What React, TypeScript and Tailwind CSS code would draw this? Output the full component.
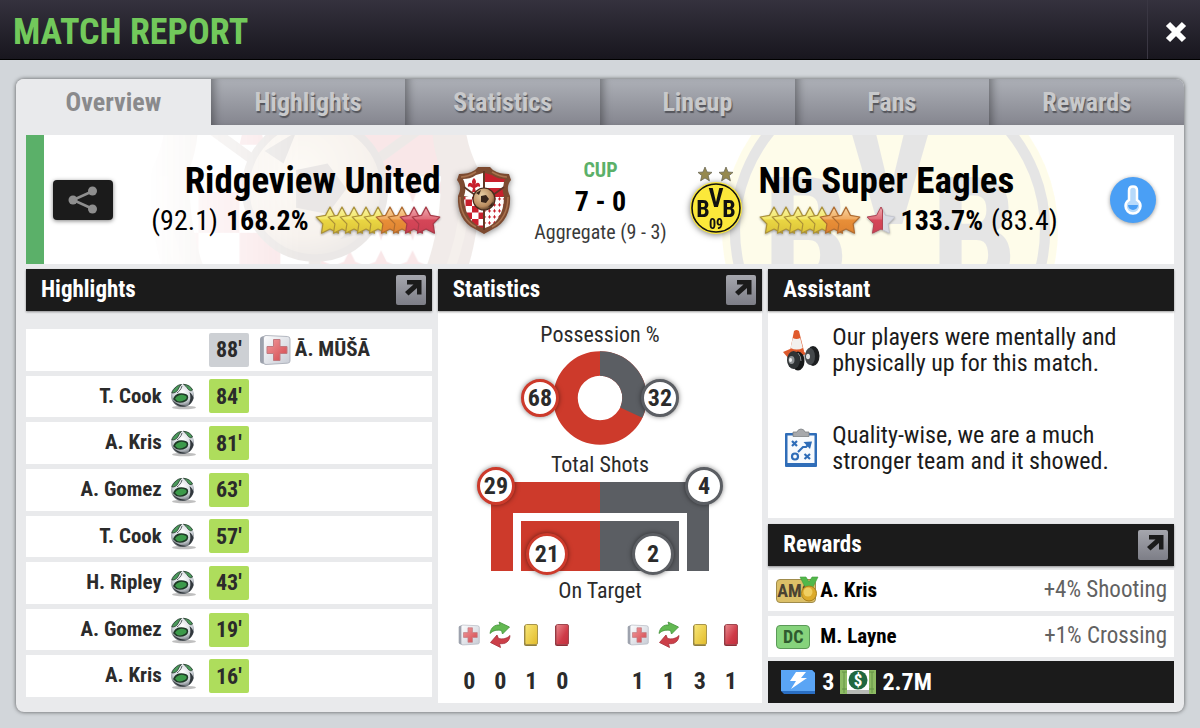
import { useState } from "react";

const TABS = ["Overview", "Highlights", "Statistics", "Lineup", "Fans", "Rewards"];

const HIGHLIGHTS = [
  { minute: 88, player: "Ā. MŪŠĀ", side: "away", type: "injury" },
  { minute: 84, player: "T. Cook", side: "home", type: "goal" },
  { minute: 81, player: "A. Kris", side: "home", type: "goal" },
  { minute: 63, player: "A. Gomez", side: "home", type: "goal" },
  { minute: 57, player: "T. Cook", side: "home", type: "goal" },
  { minute: 43, player: "H. Ripley", side: "home", type: "goal" },
  { minute: 19, player: "A. Gomez", side: "home", type: "goal" },
  { minute: 16, player: "A. Kris", side: "home", type: "goal" },
];

const STAR_PATH =
  "M15 1 L19.4 9.4 L28.8 11 L22.1 17.8 L23.5 27.2 L15 23 L6.5 27.2 L7.9 17.8 L1.2 11 L10.6 9.4 Z";

const CLUB_STAR_PATH =
  "M8 1 L10 6 L15 6.4 L11.2 9.6 L12.4 14.8 L8 12 L3.6 14.8 L4.8 9.6 L1 6.4 L6 6 Z";

function Gradients() {
  return (
    <svg width="0" height="0" className="absolute" aria-hidden="true">
      <defs>
        <linearGradient id="star-yellow" x1="0" y1="0" x2="0" y2="1">
          <stop offset="0" stopColor="#f8f3a6" />
          <stop offset="0.45" stopColor="#f3e768" />
          <stop offset="0.5" stopColor="#ead643" />
          <stop offset="1" stopColor="#dcc338" />
        </linearGradient>
        <linearGradient id="star-orange" x1="0" y1="0" x2="0" y2="1">
          <stop offset="0" stopColor="#f9d6a2" />
          <stop offset="0.45" stopColor="#f0ab62" />
          <stop offset="0.5" stopColor="#e88f38" />
          <stop offset="1" stopColor="#de8230" />
        </linearGradient>
        <linearGradient id="star-red" x1="0" y1="0" x2="0" y2="1">
          <stop offset="0" stopColor="#f0aab0" />
          <stop offset="0.45" stopColor="#e06c79" />
          <stop offset="0.5" stopColor="#d54658" />
          <stop offset="1" stopColor="#cc4053" />
        </linearGradient>
        <linearGradient id="box-grey" x1="0" y1="0" x2="1" y2="1">
          <stop offset="0" stopColor="#fdfdfe" />
          <stop offset="1" stopColor="#c8ccd5" />
        </linearGradient>
        <linearGradient id="cross-red" x1="0" y1="0" x2="1" y2="1">
          <stop offset="0" stopColor="#f09a9c" />
          <stop offset="1" stopColor="#d4474d" />
        </linearGradient>
        <linearGradient id="card-yellow" x1="0" y1="0" x2="1" y2="1">
          <stop offset="0" stopColor="#f8e778" />
          <stop offset="1" stopColor="#e2bb2b" />
        </linearGradient>
        <linearGradient id="card-red" x1="0" y1="0" x2="1" y2="1">
          <stop offset="0" stopColor="#e88b90" />
          <stop offset="0.6" stopColor="#cf3b48" />
          <stop offset="1" stopColor="#c22f3e" />
        </linearGradient>
        <radialGradient id="ball" cx="0.5" cy="0.35" r="0.7">
          <stop offset="0" stopColor="#ffffff" />
          <stop offset="0.6" stopColor="#cfd4da" />
          <stop offset="1" stopColor="#4c5358" />
        </radialGradient>
        <radialGradient id="crest-ball" cx="0.4" cy="0.35" r="0.7">
          <stop offset="0" stopColor="#e9cfa5" />
          <stop offset="0.7" stopColor="#b98a5d" />
          <stop offset="1" stopColor="#4b3020" />
        </radialGradient>
        <pattern id="checks" x="2" y="1" width="13" height="13" patternUnits="userSpaceOnUse">
          <rect width="13" height="13" fill="#fff" />
          <rect width="6.5" height="6.5" fill="#c8202d" />
          <rect x="6.5" y="6.5" width="6.5" height="6.5" fill="#c8202d" />
        </pattern>
        <pattern id="lilies" width="5" height="6" patternUnits="userSpaceOnUse">
          <rect width="5" height="6" fill="#fff" />
          <path d="M2.5 .8 L3.4 2.6 L4.4 3 L3 3.8 L2.5 5.2 L2 3.8 L.6 3 L1.6 2.6 Z" fill="#c8202d" />
        </pattern>
      </defs>
    </svg>
  );
}

function Stars({ colors }: { colors: string[] }) {
  const width = 30 + (colors.length - 1) * 12;
  return (
    <svg
      width={width}
      height="30"
      viewBox={`0 0 ${width} 30`}
      className="shrink-0 drop-shadow-[0_1px_1px_rgba(0,0,0,0.35)]"
      aria-hidden="true"
    >
      {colors.map((color, i) => (
        <path
          key={i}
          d={STAR_PATH}
          transform={`translate(${i * 12} 0)`}
          fill={`url(#star-${color})`}
          stroke={color === "yellow" ? "#ab9138" : color === "orange" ? "#b06c30" : "#a83a48"}
          strokeWidth="1.2"
          strokeLinejoin="round"
        />
      ))}
    </svg>
  );
}

function HalfStar() {
  return (
    <svg
      width="28"
      height="30"
      viewBox="1 0 28 30"
      className="shrink-0 drop-shadow-[0_1px_1px_rgba(0,0,0,0.3)]"
      aria-hidden="true"
    >
      <path d={STAR_PATH} fill="#d9dbe3" stroke="#c3c5ce" strokeLinejoin="round" />
      <path
        d="M15 1 L16.500 4 V23.700 L15 23 L6.500 27.200 L7.900 17.800 L1.200 11 L10.600 9.400 Z"
        fill="url(#star-red)"
        stroke="#b04452"
        strokeLinejoin="round"
      />
    </svg>
  );
}

function ShieldCrest({ className }: { className?: string }) {
  return (
    <svg viewBox="0 0 54 68" className={className} aria-hidden="true">
      <path
        d="M18 4 L21 1 H33 L36 4 C41 7 46 8 52 8 L54 14 C50 19 50 24 53 30 C54 45 48 58 36 63 L27 68 L18 63 C6 58 0 45 1 30 C4 24 4 19 0 14 L2 8 C8 8 13 7 18 4 Z"
        fill="#7c4a30"
      />
      <path
        d="M19 6 C14 9 9 11 4 11 M35 6 C40 9 45 11 50 11 M3 31 C3 45 9 56 19 61 M51 31 C51 45 45 56 35 61"
        fill="none"
        stroke="#a8714d"
        strokeWidth="1.5"
      />
      <path d="M26 7 L19 9 C15 12 10 13 6 13 C9 19 9 25 7 30 L26 34 Z" fill="#fff" />
      <path d="M28 7 L35 9 C39 12 44 13 48 13 C45 19 45 25 47 30 L28 34 Z" fill="#c8202d" />
      <path d="M28 16 H47 L46 22 H28 Z" fill="#fff" />
      <path d="M7 31 L26 31 V62 C14 58 7 47 7 31 Z" fill="url(#checks)" />
      <path d="M28 31 L47 31 C47 47 40 58 28 62 Z" fill="url(#lilies)" />
      <path
        d="M17 12 C20 15 19 17 18 19 C20 15 24 17 23 21 C21 20 20 21 18 22 L19 26 H15 L16 22 C14 21 13 20 11 21 C10 17 14 15 16 19 C15 17 14 15 17 12 Z"
        fill="#c8202d"
      />
      <path d="M27 5 V64 M7 21 L18 29 M47 21 L36 29" stroke="#5d3524" strokeWidth="1.6" />
      <circle cx="27" cy="33" r="11" fill="url(#crest-ball)" stroke="#472b1c" strokeWidth="1.2" />
      <path d="M24 30 L29 29 L32 33 L29 37 L24 36 Z M19 27 L24 24 L22 29 Z M31 41 L36 36 L35 40 Z" fill="#38241a" />
    </svg>
  );
}

// round badge only, the two stars above it are drawn by ClubStars
function RoundCrest({ className }: { className?: string }) {
  return (
    <svg viewBox="0 0 52 52" className={className} aria-hidden="true">
      <circle cx="26" cy="26" r="26" fill="#fbe83a" />
      <circle cx="26" cy="26" r="24" fill="none" stroke="#111" strokeWidth="1.6" />
      <g fill="#111" fontWeight="700" textAnchor="middle">
        <text x="13" y="35" fontSize="24">B</text>
        <text x="26" y="25" fontSize="26">V</text>
        <text x="39" y="35" fontSize="24">B</text>
        <text x="26" y="47" fontSize="14">09</text>
      </g>
    </svg>
  );
}

function ClubStars() {
  return (
    <svg width="38" height="16" viewBox="0 0 38 16" aria-hidden="true">
      <path d={CLUB_STAR_PATH} fill="#96894f" stroke="#6d6a55" strokeWidth="0.8" />
      <path d={CLUB_STAR_PATH} transform="translate(21 0)" fill="#96894f" stroke="#6d6a55" strokeWidth="0.8" />
    </svg>
  );
}

function FirstAidIcon({ className }: { className?: string }) {
  return (
    <svg viewBox="0 0 32 32" className={className} aria-hidden="true">
      <path d="M3 2.5 L7 1.5 V30.500 L3 29.500 Q1 29 1 27 V5 Q1 3 3 2.5 Z" fill="#9da2ad" />
      <path
        d="M7 1.5 L28.500 2.5 Q31 2.700 31 5 V27 Q31 29 28.500 29.200 L7 30.500 Q4.500 30.500 4.500 28 V4 Q4.500 1.500 7 1.5 Z"
        fill="url(#box-grey)"
        stroke="#a3a8b3"
        strokeWidth="0.8"
      />
      <path
        d="M14.500 5.500 H21 V12.500 H28 V19.500 H21 V26.500 H14.500 V19.500 H8 V12.500 H14.500 Z"
        fill="url(#cross-red)"
        stroke="#c07a80"
      />
    </svg>
  );
}

function BallIcon() {
  return (
    <svg width="28" height="28" viewBox="0 0 28 28" className="shrink-0" aria-hidden="true">
      <ellipse cx="15" cy="25.500" rx="12" ry="1.800" fill="#000" opacity="0.25" />
      <circle cx="13.500" cy="13.500" r="11.500" fill="url(#ball)" />
      <path d="M6 6 C8 3.500 11 2.500 12.500 2.500 C10 4 9.500 8 7.500 9.500 C6 11 3.500 11 2.800 11 C3.300 9 4.500 7.500 6 6 Z" fill="#4a9a5b" stroke="#26382c" strokeWidth="0.8" />
      <path d="M14.500 2.300 C19 2.500 22.500 5 23.500 8 C22 9.500 20 8.500 18.500 6.500 C17.500 5 16.500 3.500 14.500 2.300 Z" fill="#4a9a5b" stroke="#26382c" strokeWidth="0.8" />
      <path d="M5 17 C7 12 12 11 17 13 C19 14 19 17 16.500 18.500 C13 20.500 8 21 5 17 Z" fill="#3c9a4a" stroke="#1f3a27" strokeWidth="1.600" />
      <path d="M20.500 10 C23 12 24 14 24.500 16 C23.500 19.500 21.500 22 19.500 23 C21.500 19 22 14 20.500 10 Z" fill="#32383d" />
      <path d="M3.500 18 C6 23 12 25.500 17 24 C14 23.500 8 23 3.500 18 Z" fill="#2c3236" />
      <path d="M13 4 C12 8 10 9 8 11" fill="none" stroke="#5b6267" strokeWidth="1" />
    </svg>
  );
}

function SubstitutionIcon() {
  return (
    <svg width="24" height="28" viewBox="0 0 24 28" aria-hidden="true">
      <path d="M2 12.500 C3 6 7 3.500 12 4 L11 1 L21.500 6 L14.500 13 L13.500 9.500 C9 8.500 5 9.500 2 12.500 Z" fill="#63b952" stroke="#43913a" strokeWidth="0.8" />
      <path d="M22 14.500 C21.500 21 17 23.500 11.500 22.500 L12.500 26.500 L2.500 21.500 L9 14 L10.500 17.500 C15 18.500 19 17.500 22 14.500 Z" fill="#cc3f49" stroke="#a62f38" strokeWidth="0.8" />
    </svg>
  );
}

function CardIcon({ color }: { color: "yellow" | "red" }) {
  return (
    <svg width="16" height="24" viewBox="0 0 16 24" aria-hidden="true">
      <path d="M1 3 V21 Q1 23 3 23 H14 L4 2 Z" fill={color === "yellow" ? "#8d7c3c" : "#8c2d36"} />
      <rect
        x="2"
        y="1.5"
        width="12.5"
        height="20"
        rx="1.5"
        fill={`url(#card-${color})`}
        stroke={color === "yellow" ? "#a8954b" : "#a04850"}
      />
    </svg>
  );
}

function TrainingIcon() {
  return (
    <svg width="38" height="42" viewBox="0 0 38 42" className="shrink-0" aria-hidden="true">
      <path d="M1 23 L8 20 H20 L24 25 L18 30 H7 Z" fill="#dd5a2e" />
      <path d="M12 2 Q14.500 0 17 2 L22 22 Q15 26 8 22 Z" fill="#e05a2c" />
      <path d="M10.800 9 Q14.500 11 18.200 9 L20.800 19 Q15 22 8.500 19 Z" fill="#f2f0ee" />
      <path d="M18 27 L28 24 L29 28 L19 32 Z" fill="#a9adb0" />
      <ellipse cx="31" cy="27" rx="6.500" ry="10" fill="#1c1e20" />
      <ellipse cx="28" cy="27.500" rx="5" ry="8.500" fill="#44484b" />
      <ellipse cx="16" cy="32" rx="6.500" ry="9.500" fill="#17191a" />
      <ellipse cx="11.500" cy="31" rx="6.500" ry="9" fill="#2f3335" />
      <ellipse cx="9.500" cy="31" rx="3" ry="4" fill="#8d9194" />
      <ellipse cx="8.500" cy="31" rx="1.500" ry="2" fill="#eef0f1" />
      <ellipse cx="26" cy="27.500" rx="2" ry="2.800" fill="#dfe1e2" />
      <path d="M16 24 Q19 27 19 32" fill="none" stroke="#8d9194" strokeWidth="1" />
    </svg>
  );
}

function TacticsIcon() {
  return (
    <svg width="34" height="40" viewBox="0 0 34 40" className="shrink-0" aria-hidden="true">
      <rect x="1" y="5" width="32" height="34" rx="1" fill="#2f6db8" />
      <rect x="3.5" y="7.5" width="27" height="27.5" fill="#f7fafd" />
      <path d="M9 4 H13 Q14 1 17 1 Q20 1 21 4 H25 V8.500 H9 Z" fill="#a7a9ac" stroke="#7e8184" strokeWidth="0.8" />
      <g fill="none" stroke="#2f6db8" strokeWidth="2.2">
        <path d="M8 13 L13 18 M13 13 L8 18" />
        <path d="M20.500 26 L26 31 M26 26 L20.500 31" />
        <circle cx="11" cy="28.5" r="3" />
        <path d="M14 24 L19 19 H22 L25 16" />
      </g>
      <path d="M19.500 14 L28 13.500 L26 21 Z" fill="#2f6db8" />
    </svg>
  );
}

function EnergyIcon() {
  return (
    <svg width="36" height="26" viewBox="0 0 36 26" aria-hidden="true">
      <path d="M1 1 H32 L35 4 V25 H4 L1 22 Z" fill="#2a6fc4" />
      <path d="M1 1 H32 L35 4 V22 H1 Z" fill="#5aa5f5" />
      <path d="M16 3 H26 L21 9 H27 L11 20 L16 12 H10 Z" fill="#fff" />
    </svg>
  );
}

function CashIcon() {
  return (
    <svg width="36" height="26" viewBox="0 0 36 26" aria-hidden="true">
      <rect x="0" y="1" width="36" height="24" fill="#8dbb63" />
      <path d="M2 3 H34 M2 20 H34 M4 3 V24 M32 3 V24" stroke="#659447" strokeWidth="1" fill="none" />
      <rect x="7" y="1" width="22" height="20" fill="#fff" />
      <rect x="7" y="21" width="22" height="4" fill="#b7bab5" />
      <circle cx="18" cy="11" r="9.5" fill="#1f6840" />
      <text x="18" y="17" textAnchor="middle" fontSize="17" fontWeight="700" fill="#fff">
        $
      </text>
    </svg>
  );
}

function MedalIcon({ className }: { className?: string }) {
  return (
    <svg width="20" height="26" viewBox="0 0 20 26" className={className} aria-hidden="true">
      <path d="M1 1 H7 L10 6 L13 1 H19 L13 13 H7 Z" fill="#52b84a" stroke="#3f9a3a" strokeWidth="0.6" />
      <circle cx="10" cy="17.5" r="7.5" fill="#dcab2c" stroke="#a97f1c" />
      <circle cx="9" cy="16" r="4.5" fill="#f0cf62" />
    </svg>
  );
}

function OpenButton({ label }: { label: string }) {
  return (
    <button
      type="button"
      aria-label={label}
      className="flex size-[30px] items-start justify-end rounded-xs bg-linear-to-b from-[#a5a6ad] to-[#7d7e87] pt-1 pr-1"
    >
      <svg width="18" height="18" viewBox="0 0 18 18" aria-hidden="true">
        <path d="M3 1 H17.500 V15.500 H13 V9 L4.500 16.500 L1 13 L9.500 5.500 H3 Z" fill="#1b1b1b" />
      </svg>
    </button>
  );
}

function PanelHeader({ title, link }: { title: string; link?: boolean }) {
  return (
    <div className="flex h-[42px] shrink-0 items-center justify-between bg-[#1b1b1b] pr-1.5 pl-[15px] shadow-[0_1px_2px_rgba(0,0,0,0.4)]">
      <h2 className="text-[23px] font-bold text-white">{title}</h2>
      {link && <OpenButton label={`Open ${title}`} />}
    </div>
  );
}

function ValueBadge({ value, className }: { value: number; className: string }) {
  return (
    <span
      className={`absolute flex items-center justify-center rounded-full bg-white text-2xl font-bold text-[#2b2b2b] shadow-[0_0_5px_rgba(0,0,0,0.5)] ${className}`}
    >
      {value}
    </span>
  );
}

function TeamCounts({ counts }: { counts: number[] }) {
  const icons = [
    <FirstAidIcon className="size-[22px]" />,
    <SubstitutionIcon />,
    <CardIcon color="yellow" />,
    <CardIcon color="red" />,
  ];
  return (
    <ul className="grid grid-cols-4">
      {counts.map((count, i) => (
        <li key={i} className="flex w-[31px] flex-col items-center gap-5">
          <span className="flex h-7 items-center">{icons[i]}</span>
          <span className="text-2xl leading-6 font-bold">{count}</span>
        </li>
      ))}
    </ul>
  );
}

function HighlightsPanel() {
  return (
    <section className="flex flex-col">
      <PanelHeader title="Highlights" link />
      <ol className="mt-[18px] mb-1.5 flex flex-1 flex-col gap-[5px] text-[21px] font-bold text-[#2b2b2b]">
        {HIGHLIGHTS.map((event) => (
          <li key={event.minute} className="grid min-h-9 flex-1 grid-cols-2 items-center bg-white">
            <div className="flex items-center justify-end">
              {event.side === "home" && (
                <>
                  <span>{event.player}</span>
                  <span className="mr-3 ml-[7px]">
                    <BallIcon />
                  </span>
                </>
              )}
              <span
                className={`-mr-5 flex h-[34px] w-10 items-center justify-center rounded-xs text-[22px] ${
                  event.type === "goal" ? "bg-[#aedd5c]" : "bg-[#cdd0d4]"
                }`}
              >
                {event.minute}'
              </span>
            </div>
            <div className="flex items-center gap-1 pl-[30px]">
              {event.side === "away" && (
                <>
                  <FirstAidIcon className="size-8" />
                  <span>{event.player}</span>
                </>
              )}
            </div>
          </li>
        ))}
      </ol>
    </section>
  );
}

function StatisticsPanel() {
  return (
    <section className="flex flex-col bg-white">
      <PanelHeader title="Statistics" link />
      <div className="flex flex-1 flex-col items-center pt-3 pb-2.5 text-[#2b2b2b]">
        <h3 className="text-[22px] leading-6">Possession %</h3>
        <div className="relative mt-1">
          <svg width="94" height="94" viewBox="-47 -47 94 94" aria-hidden="true">
            <circle r="34.5" fill="none" stroke="#cd3a2b" strokeWidth="24.5" />
            <circle
              r="34.5"
              fill="none"
              stroke="#5b5e63"
              strokeWidth="24.5"
              pathLength="100"
              strokeDasharray="32 68"
              transform="rotate(-90)"
            />
          </svg>
          <ValueBadge value={68} className="top-7 -left-8 size-[38px] border-3 border-[#cd3a2b]" />
          <ValueBadge value={32} className="top-7 -right-8 size-[38px] border-3 border-[#5b5e63]" />
        </div>
        <h3 className="mt-2 text-[22px] leading-6">Total Shots</h3>
        <div className="relative mt-1">
          <svg width="218" height="90" viewBox="0 0 218 90" aria-hidden="true">
            <path d="M0 1 H109 V32 H22 V90 H0 Z M30 40 H109 V90 H30 Z" fill="#cd3a2b" />
            <path d="M109 1 H218 V90 H196 V32 H109 Z M109 40 H188 V90 H109 Z" fill="#5b5e63" />
          </svg>
          <ValueBadge value={29} className="-top-3.5 -left-3.5 size-[38px] border-3 border-[#cd3a2b]" />
          <ValueBadge value={4} className="-top-3.5 -right-3.5 size-[38px] border-3 border-[#5b5e63]" />
          <ValueBadge value={21} className="top-[52px] left-[35px] size-[42px] border-3 border-[#cd3a2b]" />
          <ValueBadge value={2} className="top-[52px] right-[35px] size-[42px] border-3 border-[#5b5e63]" />
        </div>
        <h3 className="mt-2 text-[22px] leading-6">On Target</h3>
        <div className="mt-auto flex w-full justify-between px-4">
          <TeamCounts counts={[0, 0, 1, 0]} />
          <TeamCounts counts={[1, 1, 3, 1]} />
        </div>
      </div>
    </section>
  );
}

function AssistantPanel() {
  return (
    <section className="mb-1.5 flex flex-1 flex-col bg-white">
      <PanelHeader title="Assistant" />
      <ul className="flex flex-col gap-[46px] px-3.5 pt-[13px] text-2xl leading-[26px] text-[#1b1b1b]">
        <li className="flex items-center gap-3">
          <TrainingIcon />
          <p className="max-w-[320px]">Our players were mentally and physically up for this match.</p>
        </li>
        <li className="flex items-center gap-3">
          <span className="flex w-[38px] justify-center">
            <TacticsIcon />
          </span>
          <p className="max-w-[300px]">Quality-wise, we are a much stronger team and it showed.</p>
        </li>
      </ul>
    </section>
  );
}

function RewardsPanel() {
  return (
    <section>
      <PanelHeader title="Rewards" link />
      <ul className="my-1 flex flex-col gap-[5px] text-[21px]">
        <li className="flex h-[41px] items-center bg-white pr-[7px] pl-2">
          <span className="w-11">
            <span className="relative flex h-6 w-10 items-center rounded-sm border border-[#a08c4c] bg-[#dcc068] text-lg font-bold text-[#4b4332]">
              AMC
              <MedalIcon className="absolute -top-1 -right-1" />
            </span>
          </span>
          <span className="flex-1 font-bold text-black">A. Kris</span>
          <span className="text-[23px] text-[#626262]">+4% Shooting</span>
        </li>
        <li className="flex h-[41px] items-center bg-white pr-[7px] pl-2">
          <span className="w-11">
            <span className="flex h-6 w-[34px] items-center justify-center rounded-sm border border-[#5b9a58] bg-[#86d37c] text-lg font-bold text-[#2f5a2f]">
              DC
            </span>
          </span>
          <span className="flex-1 font-bold text-black">M. Layne</span>
          <span className="text-[23px] text-[#626262]">+1% Crossing</span>
        </li>
      </ul>
      <div className="flex h-[42px] items-center gap-1.5 bg-[#1b1b1b] px-3 text-2xl font-bold text-white">
        <EnergyIcon />
        <span>3</span>
        <CashIcon />
        <span>2.7M</span>
      </div>
    </section>
  );
}

function Scoreboard() {
  return (
    <section className="relative flex h-[129px] items-center overflow-hidden border-l-18 border-[#5bb069] bg-white">
      <ShieldCrest className="absolute -top-[154px] left-[101px] w-[340px] opacity-10 [mask-image:linear-gradient(to_right,transparent,black_45%)]" />
      <RoundCrest className="absolute -top-[73px] left-[678px] w-[336px] opacity-10" />

      <button
        type="button"
        aria-label="Share"
        className="relative ml-[9px] flex h-10 w-[60px] shrink-0 items-center justify-center rounded-sm bg-[#1b1b1b] shadow-[0_1px_4px_rgba(0,0,0,0.5)]"
      >
        <svg width="30" height="28" viewBox="0 0 30 28" aria-hidden="true">
          <path d="M25 5 L5 14 L25 23" fill="none" stroke="#8e8e8e" strokeWidth="2.5" />
          <circle cx="24.5" cy="5" r="4.5" fill="#8e8e8e" />
          <circle cx="5" cy="14" r="4.5" fill="#8e8e8e" />
          <circle cx="24.5" cy="23" r="4.5" fill="#8e8e8e" />
        </svg>
      </button>

      <div className="relative flex flex-1 flex-col items-end">
        <h2 className="text-[37px] leading-[42px] font-bold text-black">Ridgeview United</h2>
        <div className="flex items-center text-[28px] leading-[38px] text-black">
          <span className="mr-2">(92.1)</span>
          <strong className="mr-1.5">168.2%</strong>
          <Stars
            colors={["yellow", "yellow", "yellow", "yellow", "yellow", "orange", "orange", "red", "red"]}
          />
        </div>
      </div>

      <div className="relative flex w-[318px] shrink-0 items-center justify-between px-4">
        <ShieldCrest className="w-[54px] drop-shadow-[0_1px_3px_rgba(0,0,0,0.5)]" />
        <div className="flex flex-col items-center">
          <span className="text-xl leading-7 font-bold text-[#5bb069]">CUP</span>
          <span className="text-[28px] leading-9 font-bold text-black">7 - 0</span>
          <span className="text-xl leading-6 text-[#3a3a3a]">Aggregate (9 - 3)</span>
        </div>
        <div className="flex flex-col items-center">
          <ClubStars />
          <RoundCrest className="w-[52px] drop-shadow-[0_1px_3px_rgba(0,0,0,0.5)]" />
        </div>
      </div>

      <div className="relative mr-6 flex flex-1 flex-col items-start">
        <h2 className="text-[37px] leading-[42px] font-bold text-black">NIG Super Eagles</h2>
        <div className="flex items-center text-[28px] leading-[38px] text-black">
          <Stars colors={["yellow", "yellow", "yellow", "yellow", "yellow", "orange", "orange"]} />
          <span className="mx-1.5">
            <HalfStar />
          </span>
          <strong className="mr-2">133.7%</strong>
          <span>(83.4)</span>
        </div>
      </div>

      <button
        type="button"
        aria-label="Team temperature"
        className="relative mr-[18px] flex size-[46px] shrink-0 items-center justify-center rounded-full bg-[#4a9ff5] shadow-[0_1px_4px_rgba(0,0,0,0.4)]"
      >
        <svg width="18" height="30" viewBox="0 0 18 30" aria-hidden="true">
          <path
            d="M5 5.500 Q5 1.500 9 1.500 Q13 1.500 13 5.500 V15 Q16.500 17 16.500 21 A7.500 7.500 0 0 1 1.500 21 Q1.500 17 5 15 Z"
            fill="#b7dafb"
            stroke="#fff"
            strokeWidth="2.5"
          />
          <path d="M4 20 H14 A5 5 0 0 1 4 20 Z" fill="#4a9ff5" />
        </svg>
      </button>
    </section>
  );
}

export default function App() {
  const [activeTab, setActiveTab] = useState("Overview");

  return (
    <div className="flex min-h-screen flex-col bg-[#d2d6da] font-['Liberation_Sans_Narrow','Roboto_Condensed','Liberation_Sans',sans-serif]">
      <Gradients />
      <header className="flex h-[60px] items-stretch justify-between border-b border-black bg-linear-to-b from-[#35323e] to-[#18161e] pl-[13px]">
        <h1 className="flex items-center pt-1 text-4xl font-bold text-[#72c95b]">MATCH REPORT</h1>
        <button
          type="button"
          aria-label="Close"
          className="flex w-[53px] items-center justify-center border-l border-[#3a3743] pt-1 pl-1"
        >
          <svg width="22" height="22" viewBox="0 0 22 22" aria-hidden="true">
            <path d="M3 3 L19 19 M19 3 L3 19" stroke="#fff" strokeWidth="6" />
          </svg>
        </button>
      </header>

      <main className="mx-4 mt-[19px] mb-4 flex flex-1 flex-col rounded-lg bg-[#e9eaec] shadow-[0_0_4px_rgba(0,0,0,0.6)]">
        <nav className="grid grid-cols-6 overflow-hidden rounded-t-lg" role="tablist">
          {TABS.map((tab) => (
            <button
              key={tab}
              type="button"
              role="tab"
              aria-selected={activeTab === tab}
              onClick={() => setActiveTab(tab)}
              className={`h-[46px] text-[26px] font-bold ${
                activeTab === tab
                  ? "bg-[#e9eaec] text-[#8a8a8c]"
                  : "bg-linear-to-b from-[#adb0b7] to-[#85868f] text-[#c8c9cb] shadow-[inset_8px_0_8px_-5px_rgba(0,0,0,0.35)] [text-shadow:1px_2px_1px_#55565c]"
              }`}
            >
              {tab}
            </button>
          ))}
        </nav>

        <div className="flex flex-1 flex-col gap-[5px] px-2.5 pt-2.5 pb-[9px]">
          <Scoreboard />
          <div className="grid flex-1 grid-cols-[5fr_4fr_5fr] gap-1.5">
            <HighlightsPanel />
            <StatisticsPanel />
            <div className="flex flex-col">
              <AssistantPanel />
              <RewardsPanel />
            </div>
          </div>
        </div>
      </main>
    </div>
  );
}
